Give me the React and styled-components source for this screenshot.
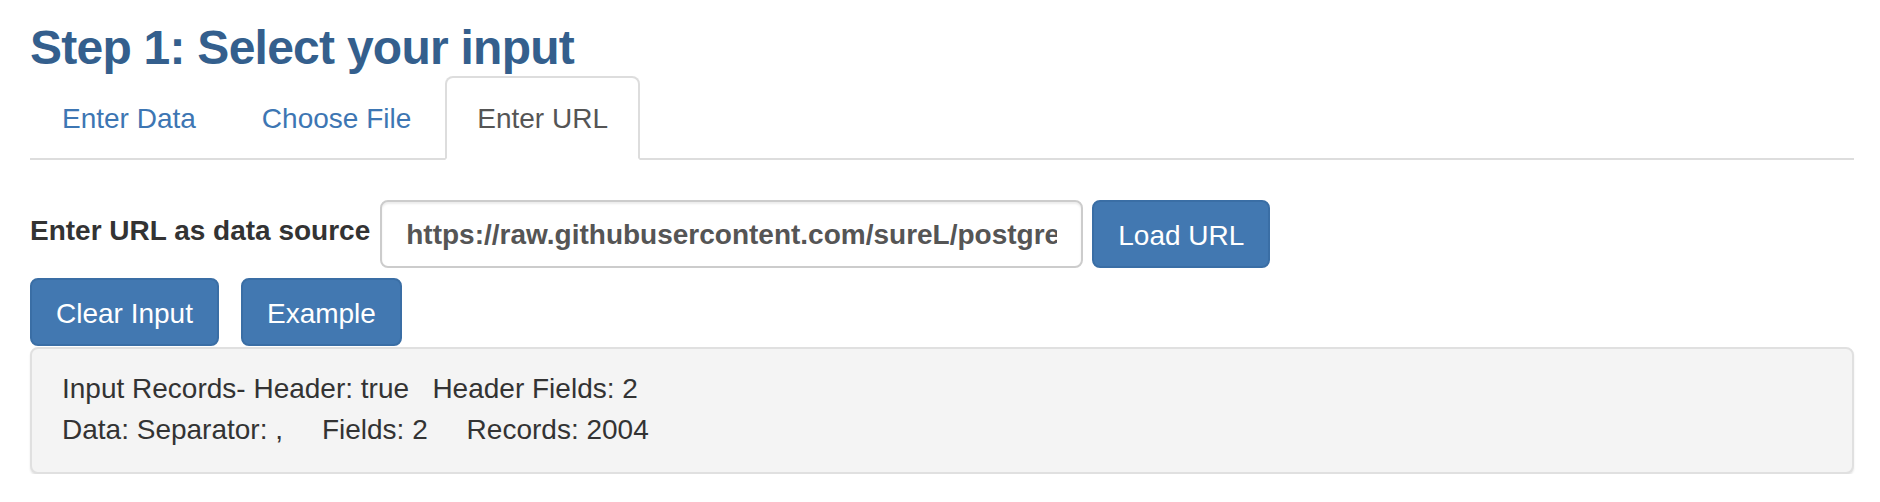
import React from 'react';
import styled, { createGlobalStyle } from 'styled-components';

const GlobalStyle = createGlobalStyle`
  body {
    margin: 0;
    background: #fff;
    color: #333;
    font-family: "Liberation Sans", Arial, Helvetica, sans-serif;
    font-size: 28px;
    line-height: 40px;
  }
  * {
    box-sizing: border-box;
  }
`;

const Page = styled.div`
  padding: 0 26px 0 30px;
`;

const Title = styled.h3`
  margin: 0;
  padding-top: 21px;
  font-size: 48px;
  line-height: 53px;
  font-weight: bold;
  letter-spacing: -0.75px;
  color: #345f8d;
`;

const Tabs = styled.ul`
  display: flex;
  list-style: none;
  margin: 2px 0 0;
  padding: 0;
  border-bottom: 2px solid #ddd;
`;

const Tab = styled.li`
  margin: 0 2px -2px 0;
`;

const TabLink = styled.a`
  display: block;
  padding: 21px 30px 19px;
  border: 2px solid transparent;
  border-radius: 8px 8px 0 0;
  font-size: 28px;
  line-height: 40px;
  text-decoration: none;
  cursor: pointer;
  color: ${(props) => (props.$active ? '#555' : '#3d76b3')};
  background: ${(props) => (props.$active ? '#fff' : 'transparent')};
  border-color: ${(props) => (props.$active ? '#ddd #ddd transparent' : 'transparent')};
`;

const FormRow = styled.div`
  display: flex;
  align-items: flex-start;
  margin-top: 40px;
`;

const Label = styled.label`
  padding-top: 11px;
  margin-right: 10px;
  font-weight: bold;
  color: #333;
`;

const UrlInput = styled.input`
  width: 703px;
  height: 68px;
  padding: 2px 24px 0;
  border: 2px solid #ccc;
  border-radius: 8px;
  box-shadow: inset 0 2px 2px rgba(0, 0, 0, 0.075);
  font-family: inherit;
  font-size: 28px;
  font-weight: bold;
  color: #555;
  background: #fff;
  outline: none;
`;

const Button = styled.button`
  height: 68px;
  padding: 4px 24px 0;
  margin-left: ${(props) => props.$offset || 0}px;
  border: 2px solid #3a6ea5;
  border-radius: 8px;
  background: #4278b1;
  color: #fff;
  font-family: inherit;
  font-size: 28px;
  line-height: 40px;
  cursor: pointer;
`;

const ButtonRow = styled.div`
  display: flex;
  gap: 22px;
  margin-top: 10px;
`;

const Well = styled.div`
  margin-top: 1px;
  padding: 20px 30px 22px;
  background: #f4f4f4;
  border: 2px solid #e0e0e0;
  border-radius: 8px;
  box-shadow: 0 2px 2px rgba(0, 0, 0, 0.1);
`;

const StatLine = styled.div`
  white-space: pre;
  line-height: 40px;
  color: #333;
  & + & {
    margin-top: 1px;
  }
`;

const tabs = ['Enter Data', 'Choose File', 'Enter URL'];

export default function App() {
  return (
    <Page>
      <GlobalStyle />
      <Title>Step 1: Select your input</Title>
      <Tabs>
        {tabs.map((name) => (
          <Tab key={name}>
            <TabLink $active={name === 'Enter URL'}>{name}</TabLink>
          </Tab>
        ))}
      </Tabs>

      <FormRow>
        <Label htmlFor="url">Enter URL as data source</Label>
        <UrlInput
          id="url"
          readOnly
          value="https://raw.githubusercontent.com/sureL/postgresql-csv-import/master/data.csv"
        />
        <Button $offset={9}>Load URL</Button>
      </FormRow>

      <ButtonRow>
        <Button>Clear Input</Button>
        <Button>Example</Button>
      </ButtonRow>

      <Well>
        <StatLine>{'Input Records- Header: true   Header Fields: 2'}</StatLine>
        <StatLine>{'Data: Separator: ,     Fields: 2     Records: 2004'}</StatLine>
      </Well>
    </Page>
  );
}
